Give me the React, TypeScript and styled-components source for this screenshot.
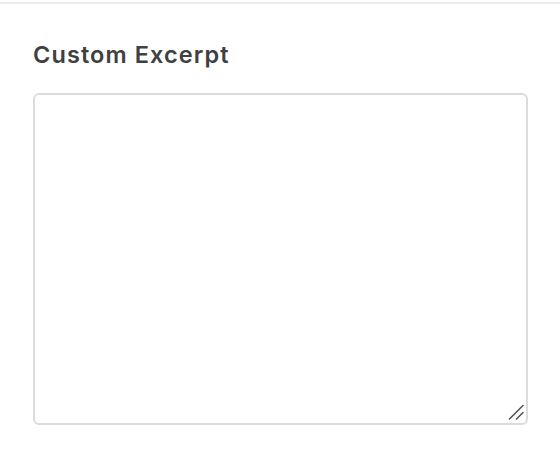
import styled, { createGlobalStyle } from 'styled-components';

const GlobalStyle = createGlobalStyle`
  html, body {
    margin: 0;
    padding: 0;
    background: #ffffff;
  }
  body {
    font-family: 'Inter', 'Liberation Sans', Arial, sans-serif;
  }
`;

const Panel = styled.div`
  padding-top: 2px;
`;

const Divider = styled.div`
  height: 2px;
  background-color: #ecebf1;
`;

const Section = styled.div`
  display: flex;
  flex-direction: column;
  padding: 37px 33px 0 33px;
`;

const Label = styled.label`
  font-family: 'Inter', 'Liberation Sans', Arial, sans-serif;
  font-size: 23.5px;
  font-weight: 600;
  letter-spacing: 1.1px;
  color: #404040;
  line-height: 28px;
  margin-bottom: 24px;
`;

const Field = styled.div`
  position: relative;
  width: 495px;
  height: 332px;
`;

const Excerpt = styled.textarea`
  display: block;
  box-sizing: border-box;
  width: 100%;
  height: 100%;
  border: 2px solid #dcdcdc;
  border-radius: 6px;
  background: #ffffff;
  resize: none;
  outline: none;
  padding: 10px;
  font-family: 'Inter', 'Liberation Sans', Arial, sans-serif;
  font-size: 16px;
  color: #3d3d3d;
`;

const Grip = styled.svg`
  position: absolute;
  right: 4px;
  bottom: 5px;
  width: 16px;
  height: 16px;
  pointer-events: none;
`;

export default function App() {
  return (
    <>
      <GlobalStyle />
      <Panel>
        <Divider />
        <Section>
          <Label htmlFor="custom-excerpt">Custom Excerpt</Label>
          <Field>
            <Excerpt id="custom-excerpt" />
            <Grip viewBox="0 0 16 16">
              <line x1="1.5" y1="15" x2="15" y2="1.5" stroke="#555" strokeWidth="1.6" strokeLinecap="round" />
              <line x1="8.5" y1="15" x2="15" y2="8.5" stroke="#555" strokeWidth="1.6" strokeLinecap="round" />
            </Grip>
          </Field>
        </Section>
      </Panel>
    </>
  );
}
